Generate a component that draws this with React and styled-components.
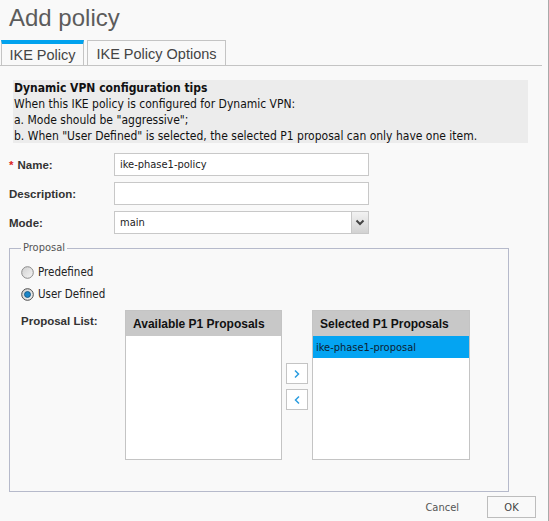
import styled, { createGlobalStyle } from 'styled-components';

const GlobalStyle = createGlobalStyle`
  html, body {
    margin: 0;
    padding: 0;
    background: #f9f9f9;
  }
`

const Page = styled.div`
  width: 549px;
  height: 521px;
  box-sizing: border-box;
  background: #f9f9f9;
  border-right: 1px solid #a9a9a9;
  font-family: "DejaVu Sans Condensed", "DejaVu Sans", sans-serif;
  font-size: 11.5px;
  color: #222;
  overflow: hidden;
`

const Title = styled.div`
  height: 40px;
  box-sizing: border-box;
  padding: 4px 0 0 9px;
  font-family: "Liberation Sans", Arial, sans-serif;
  font-size: 24px;
  line-height: 28px;
  color: #5c5c5c;
`

const TabBar = styled.div`
  display: flex;
  gap: 3px;
  width: 542px;
  height: 26px;
  box-sizing: border-box;
  padding-left: 1px;
  border-bottom: 1px solid #c4c4c4;
`

const Tab = styled.div`
  width: ${p => p.width}px;
  height: 25px;
  box-sizing: border-box;
  border: 1px solid #c4c4c4;
  border-bottom: none;
  border-top: ${p => (p.active ? '4px solid #00a2ee' : '1px solid #c4c4c4')};
  display: flex;
  align-items: center;
  justify-content: center;
  padding-top: ${p => (p.active ? '0' : '2px')};
  font-family: "Liberation Sans", Arial, sans-serif;
  font-size: 14.5px;
  color: #444;
  background: #f9f9f9;
`

const Tips = styled.div`
  margin: 14px 0 0 13px;
  width: 515px;
  height: 63px;
  box-sizing: border-box;
  padding: 0 1px;
  background: #ececec;
  font-size: 12px;
  line-height: 16px;
  color: #111;
`

const TipsTitle = styled.div`
  font-weight: bold;
`

const FormGrid = styled.div`
  display: grid;
  grid-template-columns: 105px 255px;
  row-gap: 6px;
  margin: 10px 0 0 9px;
  font-size: 11px;
`

const Label = styled.div`
  display: flex;
  align-items: center;
  font-family: "Liberation Sans", Arial, sans-serif;
  font-size: 11.5px;
  font-weight: bold;
  color: #333;
`

const Star = styled.span`
  color: #d22;
  margin-right: 4px;
`

const Input = styled.div`
  height: 23px;
  box-sizing: border-box;
  border: 1px solid #c8c8c8;
  background: #fff;
  padding-left: 5px;
  display: flex;
  align-items: center;
  color: #222;
`

const SelectBox = styled(Input)`
  justify-content: space-between;
  padding-right: 0;
`

const SelectArrow = styled.div`
  width: 16px;
  height: 21px;
  border-left: 1px solid #c8c8c8;
  background: linear-gradient(#f2f2f2, #d2d2d2);
  display: flex;
  align-items: center;
  justify-content: center;
`

const Fieldset = styled.fieldset`
  margin: 7px 0 0 9px;
  width: 500px;
  height: 251px;
  box-sizing: border-box;
  border: 1px solid #b6bacb;
  padding: 6px 11px 0 11px;
  min-width: 0;
`

const Legend = styled.legend`
  padding: 0 2px;
  line-height: 14px;
  font-size: 11px;
  color: #555;
`

const RadioRow = styled.div`
  display: flex;
  align-items: center;
  gap: 4px;
  height: 22px;
  color: #222;
`

const ListArea = styled.div`
  display: grid;
  grid-template-columns: 100px 157px 22px 158px;
  column-gap: 4px;
  margin-top: 5px;
`

const ListLabel = styled(Label)`
  align-items: flex-start;
  padding-top: 5px;
`

const ListBox = styled.div`
  height: 150px;
  box-sizing: border-box;
  border: 1px solid #c4c4c4;
  background: #fff;
  display: flex;
  flex-direction: column;
`

const ListHeader = styled.div`
  height: 25px;
  flex-shrink: 0;
  background: #c8c8c8;
  display: flex;
  align-items: center;
  padding-left: 7px;
  font-family: "Liberation Sans", Arial, sans-serif;
  font-size: 12px;
  font-weight: bold;
  color: #111;
`

const ListItem = styled.div`
  height: 22px;
  display: flex;
  align-items: center;
  padding-left: 3px;
  font-size: 11px;
  background: ${p => (p.selected ? '#04a4f2' : 'transparent')};
  color: #0c2233;
`

const MoveButtons = styled.div`
  display: flex;
  flex-direction: column;
  justify-content: center;
  gap: 5px;
  padding-top: 3px;
`

const MoveButton = styled.div`
  width: 22px;
  height: 21px;
  box-sizing: border-box;
  border: 1px solid #c4c4c4;
  background: #fff;
  display: flex;
  align-items: center;
  justify-content: center;
`

const Footer = styled.div`
  display: flex;
  justify-content: flex-end;
  align-items: center;
  gap: 28px;
  margin-top: 4px;
  padding-right: 12px;
  font-size: 11px;
`

const CancelLink = styled.div`
  color: #555;
`

const OkButton = styled.div`
  width: 49px;
  height: 22px;
  box-sizing: border-box;
  border: 1px solid #bdbdbd;
  display: flex;
  align-items: center;
  justify-content: center;
  color: #444;
`

const Radio = ({ checked }) => (
  <svg width="13" height="13" viewBox="0 0 13 13">
    <defs>
      <linearGradient id={checked ? 'rg1' : 'rg0'} x1="0" y1="0" x2="1" y2="1">
        <stop offset="0" stopColor="#cfcfcf" />
        <stop offset="1" stopColor="#f6f6f6" />
      </linearGradient>
    </defs>
    <circle cx="6.5" cy="6.5" r="5.8" fill={`url(#${checked ? 'rg1' : 'rg0'})`} stroke={checked ? '#4b4b4b' : '#8a8a8a'} strokeWidth="1" />
    {checked && <circle cx="6.5" cy="6.5" r="3" fill="#1b86c8" stroke="#124f78" strokeWidth="0.8" />}
  </svg>
);

const Chevron = ({ dir }) => (
  <svg width="8" height="10" viewBox="0 0 8 10">
    <path d={dir === 'right' ? 'M2 1.5 L5.5 5 L2 8.5' : 'M6 1.5 L2.5 5 L6 8.5'} fill="none" stroke="#2a9de0" strokeWidth="1.5" />
  </svg>
);

const App = () => {
  return (
    <Page>
      <GlobalStyle />
      <Title>Add policy</Title>
      <TabBar>
        <Tab active width={83}>IKE Policy</Tab>
        <Tab width={139}>IKE Policy Options</Tab>
      </TabBar>
      <Tips>
        <TipsTitle>Dynamic VPN configuration tips</TipsTitle>
        <div>When this IKE policy is configured for Dynamic VPN:</div>
        <div>a. Mode should be "aggressive";</div>
        <div>b. When "User Defined" is selected, the selected P1 proposal can only have one item.</div>
      </Tips>
      <FormGrid>
        <Label><Star>*</Star>Name:</Label>
        <Input>ike-phase1-policy</Input>
        <Label>Description:</Label>
        <Input />
        <Label>Mode:</Label>
        <SelectBox>
          main
          <SelectArrow>
            <svg width="10" height="7" viewBox="0 0 10 7">
              <path d="M1.5 1.5 L5 5 L8.5 1.5" fill="none" stroke="#444" strokeWidth="2" />
            </svg>
          </SelectArrow>
        </SelectBox>
      </FormGrid>
      <Fieldset>
        <Legend>Proposal</Legend>
        <RadioRow><Radio />Predefined</RadioRow>
        <RadioRow><Radio checked />User Defined</RadioRow>
        <ListArea>
          <ListLabel>Proposal List:</ListLabel>
          <ListBox>
            <ListHeader>Available P1 Proposals</ListHeader>
          </ListBox>
          <MoveButtons>
            <MoveButton><Chevron dir="right" /></MoveButton>
            <MoveButton><Chevron dir="left" /></MoveButton>
          </MoveButtons>
          <ListBox>
            <ListHeader>Selected P1 Proposals</ListHeader>
            <ListItem selected>ike-phase1-proposal</ListItem>
          </ListBox>
        </ListArea>
      </Fieldset>
      <Footer>
        <CancelLink>Cancel</CancelLink>
        <OkButton>OK</OkButton>
      </Footer>
    </Page>
  );
};

export default App;
